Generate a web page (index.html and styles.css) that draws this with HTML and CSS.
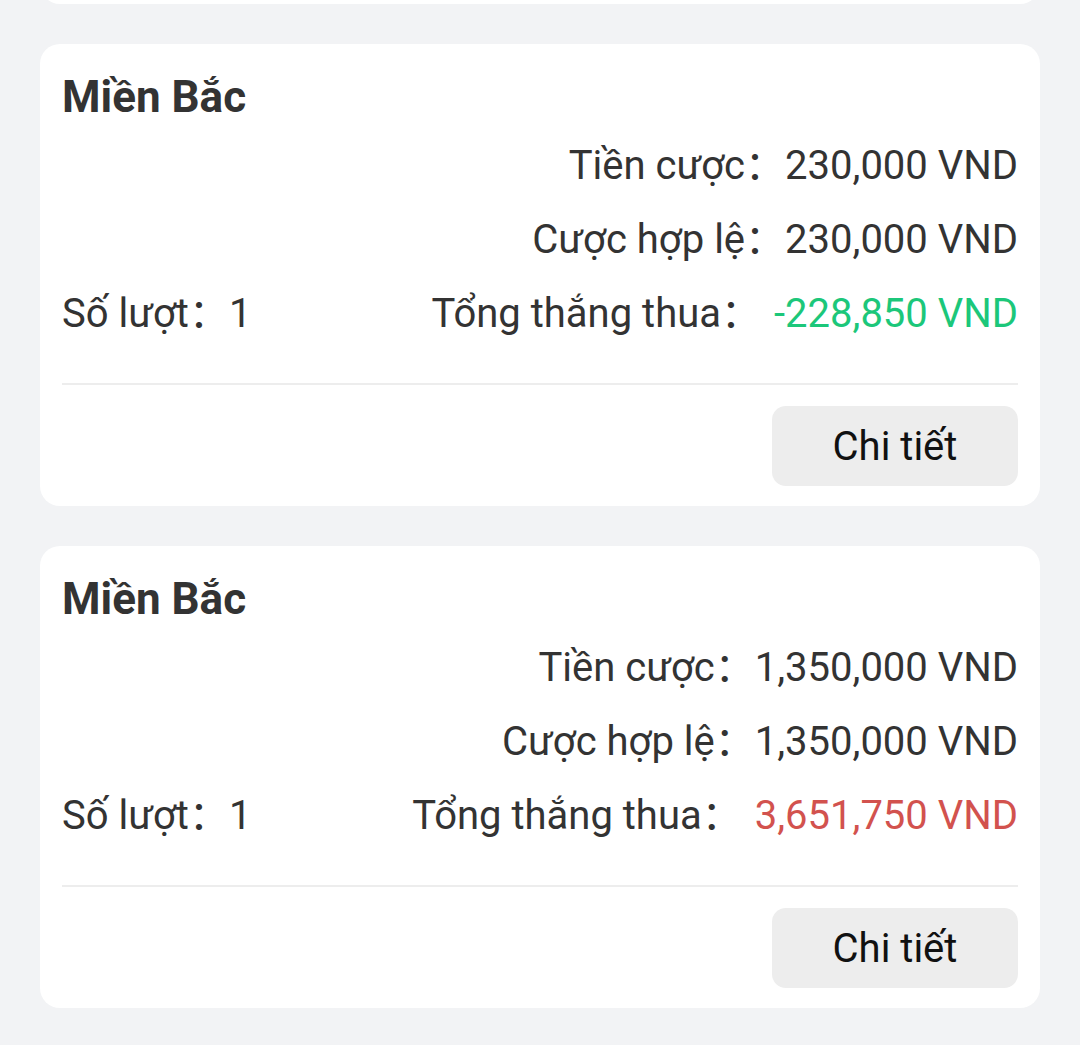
FILE: index.html
```html
<!DOCTYPE html>
<html lang="vi">
<head>
  <meta charset="UTF-8">
  <meta name="viewport" content="width=device-width, initial-scale=1.0">
  <title>Lịch sử cược</title>
  <link rel="stylesheet" href="styles.css">
</head>
<body>
  <div class="list">
    <div class="card card-prev"></div>

    <div class="card">
      <div class="card-title">Miền Bắc</div>
      <div class="stats">
        <div class="stat-row">
          <span></span>
          <span class="stat">Tiền cược<span class="colon">：</span>230,000 VND</span>
        </div>
        <div class="stat-row">
          <span></span>
          <span class="stat">Cược hợp lệ<span class="colon">：</span>230,000 VND</span>
        </div>
        <div class="stat-row">
          <span class="stat">Số lượt<span class="colon">：</span>1</span>
          <span class="stat">Tổng thắng thua<span class="colon">：</span><span class="amount win">-228,850 VND</span></span>
        </div>
      </div>
      <div class="card-footer">
        <button class="detail-btn">Chi tiết</button>
      </div>
    </div>

    <div class="card">
      <div class="card-title">Miền Bắc</div>
      <div class="stats">
        <div class="stat-row">
          <span></span>
          <span class="stat">Tiền cược<span class="colon">：</span>1,350,000 VND</span>
        </div>
        <div class="stat-row">
          <span></span>
          <span class="stat">Cược hợp lệ<span class="colon">：</span>1,350,000 VND</span>
        </div>
        <div class="stat-row">
          <span class="stat">Số lượt<span class="colon">：</span>1</span>
          <span class="stat">Tổng thắng thua<span class="colon">：</span><span class="amount lose">3,651,750 VND</span></span>
        </div>
      </div>
      <div class="card-footer">
        <button class="detail-btn">Chi tiết</button>
      </div>
    </div>
  </div>
</body>
</html>
```

FILE: styles.css
```css
* {
  margin: 0;
  padding: 0;
  box-sizing: border-box;
}

body {
  font-family: Roboto, 'Noto Sans CJK SC', sans-serif;
  background: #f2f3f5;
  color: #333333;
  overflow: hidden;
}

.list {
  padding: 0 40px;
  display: flex;
  flex-direction: column;
  gap: 40px;
}

.card {
  background: #ffffff;
  border-radius: 20px;
  padding: 22px 22px 20px;
}

.card-prev {
  height: 200px;
  margin-top: -196px;
}

.card-title {
  font-size: 44px;
  font-weight: 700;
  line-height: 62px;
  color: #333333;
}

.stats {
  margin-top: -3px;
  padding-bottom: 36px;
  border-bottom: 2px solid #ededed;
}

.stat-row {
  display: flex;
  justify-content: space-between;
  align-items: center;
  height: 74px;
  font-size: 40px;
}

.stat {
  white-space: nowrap;
}

.colon {
  font-family: 'Noto Sans CJK SC', sans-serif;
}

.amount {
  margin-left: 13px;
}

.amount.win {
  color: #1cc77a;
}

.amount.lose {
  color: #d2524e;
}

.card-footer {
  display: flex;
  justify-content: flex-end;
  padding-top: 21px;
}

.detail-btn {
  width: 246px;
  height: 80px;
  border: none;
  border-radius: 14px;
  background: #ededed;
  font-family: Roboto, sans-serif;
  font-size: 40px;
  color: #111111;
}
```
